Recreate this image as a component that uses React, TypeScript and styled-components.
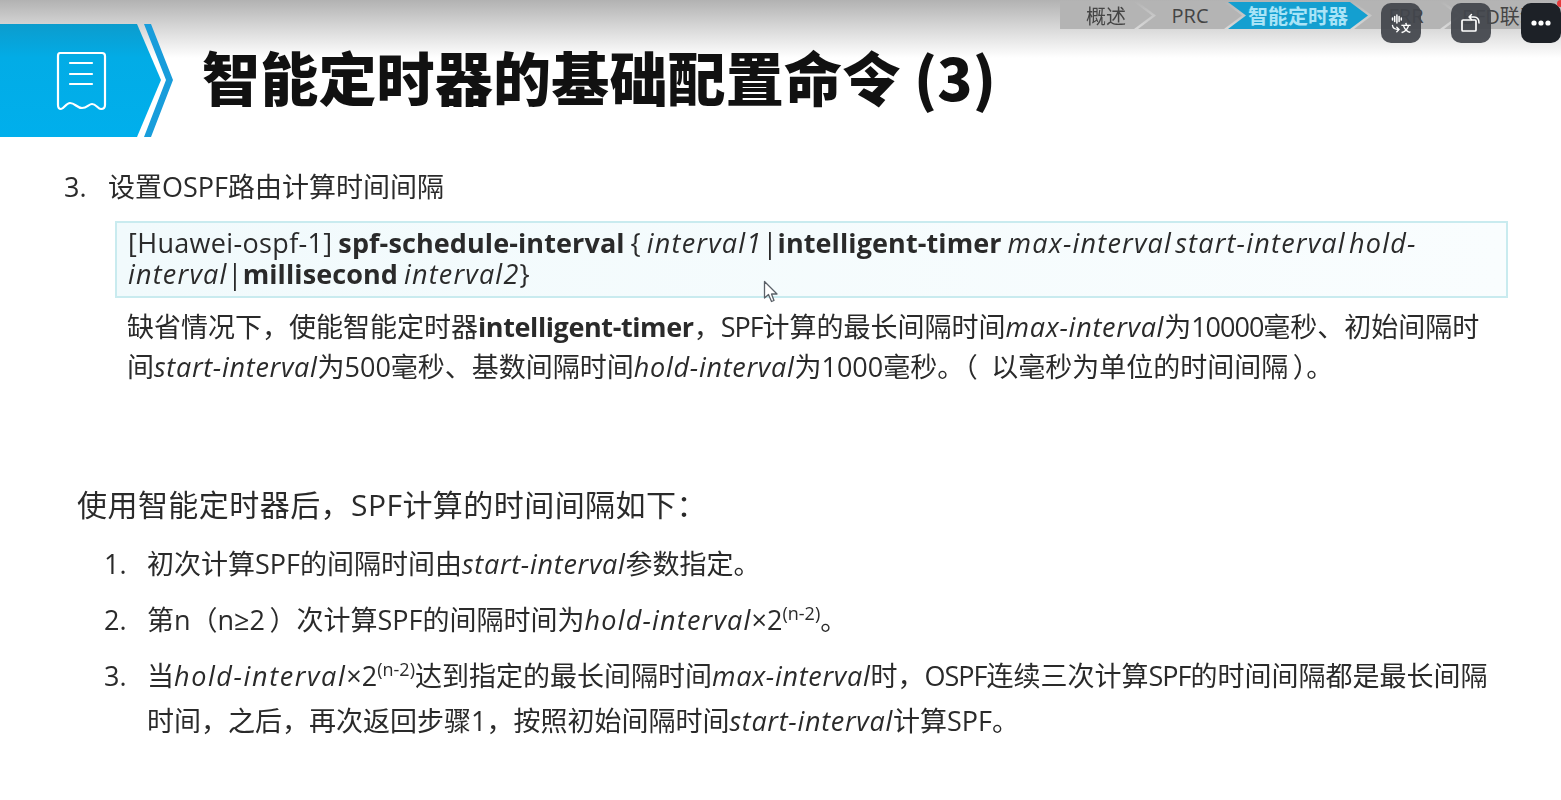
import styled, { createGlobalStyle } from "styled-components";

const GlobalStyle = createGlobalStyle`
  html, body {
    margin: 0;
    padding: 0;
    background: #fff;
  }
`;

const Page = styled.div`
  position: relative;
  width: 1561px;
  height: 800px;
  overflow: hidden;
  background: #fff;
  color: #2a2a2a;
  font-family: "Open Sans", "Noto Sans CJK SC", sans-serif;
`;

const Slide = styled.div`
  filter: blur(0.5px);
`;

const Header = styled.header`
  height: 137px;
  padding-top: 24px;
  box-sizing: border-box;
  display: flex;
  align-items: flex-start;
  background: linear-gradient(#b2b2b2 0, #d8d8d8 28px, #fff 58px);
`;

const Banner = styled.svg`
  flex: none;
  display: block;
`;

const Title = styled.h1`
  margin: 19px 0 0 27px;
  font-size: 58px;
  line-height: 66px;
  letter-spacing: 0.2px;
  font-weight: 900;
  color: #111;
  white-space: nowrap;
  font-family: "Noto Sans CJK SC", sans-serif;
`;

const Nav = styled.nav`
  position: absolute;
  top: 2px;
  left: 1060px;
  display: flex;
  height: 27px;
`;

const Crumb = styled.div<{ $w: number; $active?: boolean; $first?: boolean }>`
  flex: none;
  width: ${(p) => p.$w}px;
  margin-right: -14px;
  display: flex;
  align-items: center;
  justify-content: center;
  font-size: 20px;
  white-space: nowrap;
  background: ${(p) => (p.$active ? "#149fd0" : "#b4b4b4")};
  color: ${(p) => (p.$active ? "#a9e4f7" : "#444")};
  font-weight: ${(p) => (p.$active ? 700 : 400)};
  clip-path: ${(p) =>
    p.$first
      ? "polygon(0 0, calc(100% - 18px) 0, 100% 50%, calc(100% - 18px) 100%, 0 100%)"
      : "polygon(0 0, calc(100% - 18px) 0, 100% 50%, calc(100% - 18px) 100%, 0 100%, 18px 50%)"};
`;

const Body = styled.main`
  padding: 30px 0 0 64px;
  font-size: 27px;
  line-height: 40px;
`;

const Step = styled.div`
  display: flex;
  white-space: nowrap;
`;

const StepNo = styled.span`
  width: 44px;
  flex: none;
`;

const CommandBox = styled.div`
  width: 1393px;
  height: 77px;
  margin: 14px 0 0 51px;
  padding: 4px 11px 0;
  box-sizing: border-box;
  border: 2px solid #c9ebef;
  background: linear-gradient(90deg, #f1fafc, #f9fdfe);
  font-size: 27px;
  line-height: 31px;
  letter-spacing: 0.33px;
  word-spacing: -1.5px;
  white-space: nowrap;
`;

const Paragraph = styled.p`
  margin: 9px 0 0 63px;
  white-space: nowrap;
`;

const Intro = styled.p`
  margin: 98px 0 0 13px;
  font-size: 30px;
  letter-spacing: 0.45px;
  white-space: nowrap;
`;

const Steps = styled.ol`
  list-style: none;
  margin: 16px 0 0 40px;
  padding: 0;
  display: flex;
  flex-direction: column;
  gap: 11px;
  line-height: 45px;
`;

const StepItem = styled.li`
  display: flex;
  white-space: nowrap;
`;

const ItemNo = styled.span`
  width: 43px;
  flex: none;
`;

const Term = styled.i<{ $track?: number }>`
  font-style: italic;
  letter-spacing: ${(p) => p.$track ?? 0.7}px;
`;

const CommandTerm = styled(Term)`
  letter-spacing: 1.2px;
  word-spacing: -5px;
`;

const Key = styled.b`
  font-weight: 700;
  letter-spacing: -0.4px;
`;

const CommandKey = styled(Key)`
  letter-spacing: 0.1px;
`;

const Latin = styled.span`
  letter-spacing: -1px;
`;

const Sup = styled.sup`
  font-size: 18px;
  line-height: 0;
  vertical-align: 10px;
`;

const FloatButton = styled.button<{ $x: number; $dark?: boolean }>`
  position: absolute;
  top: 3px;
  left: ${(p) => p.$x}px;
  width: 40px;
  height: 40px;
  padding: 0;
  border: 0;
  border-radius: 10px;
  display: flex;
  align-items: center;
  justify-content: center;
  background: ${(p) => (p.$dark ? "#1d2127" : "rgba(66, 69, 75, 0.93)")};
  color: #fff;
`;

const TranslateGlyph = styled.span`
  position: absolute;
  left: 20px;
  top: 19px;
  font-size: 10px;
  line-height: 11px;
  font-weight: 700;
  font-family: "Noto Sans CJK SC", sans-serif;
`;

const Pointer = styled.svg`
  position: absolute;
  left: 763px;
  top: 280px;
`;

const RedDot = styled.div`
  position: absolute;
  top: -3px;
  right: -3px;
  width: 7px;
  height: 7px;
  border-radius: 50%;
  background: #e5393a;
`;

export default function App() {
  return (
    <Page>
      <GlobalStyle />
      <Slide>
        <Header>
          <Banner width="175" height="113" viewBox="0 0 175 113">
            <defs>
              <linearGradient id="bannerFill" x1="0" y1="0" x2="0" y2="1">
                <stop offset="0" stopColor="#0c9ccd" />
                <stop offset="0.3" stopColor="#02ace6" />
                <stop offset="1" stopColor="#00afec" />
              </linearGradient>
            </defs>
            <path d="M0 0H137L161 56L137 113H0Z" fill="url(#bannerFill)" />
            <path d="M144 0H151L173 56L151 113H144L166 56Z" fill="#189ddb" />
            <g fill="none" stroke="#fff" strokeWidth="2.2" strokeLinecap="round" strokeLinejoin="round">
              <path d="M60 29H102Q105 29 105 32V81Q105 85 101 85C98 85 96 80 92 80C89 80 87 84 82 84C77 84 75 79 70 79C66 79 64 85 61 85Q58 85 58 81V32Q58 29 60 29Z" />
              <path d="M70 39H92M70 50H92M70 60H92" />
            </g>
          </Banner>
          <Title>智能定时器的基础配置命令 (3)</Title>
        </Header>
        <Nav>
          <Crumb $w={92} $first>概述</Crumb>
          <Crumb $w={104}>PRC</Crumb>
          <Crumb $w={140} $active>智能定时器</Crumb>
          <Crumb $w={104}>FRR</Crumb>
          <Crumb $w={114}>BFD联动</Crumb>
        </Nav>
        <Body>
          <Step>
            <StepNo>3.</StepNo>
            <span>设置OSPF路由计算时间间隔</span>
          </Step>
          <CommandBox>
            [Huawei-ospf-1] <CommandKey>spf-schedule-interval</CommandKey> {"{ "}
            <CommandTerm>interval1</CommandTerm>|<CommandKey>intelligent-timer</CommandKey>{" "}
            <CommandTerm>max-interval start-interval hold-</CommandTerm>
            <br />
            <CommandTerm>interval</CommandTerm>|<CommandKey>millisecond</CommandKey> <CommandTerm>interval2</CommandTerm>{"}"}
          </CommandBox>
          <Paragraph>
            缺省情况下，使能智能定时器<Key>intelligent-timer</Key>，<Latin>SPF</Latin>计算的最长间隔时间<Term>max-interval</Term>为<Latin>10000</Latin>毫秒、初始间隔时
            <br />
            间<Term>start-interval</Term>为500毫秒、基数间隔时间<Term>hold-interval</Term>为1000毫秒。（{"\u2002"}以毫秒为单位的时间间隔{"\u2009"}）。
          </Paragraph>
          <Intro>使用智能定时器后，SPF计算的时间间隔如下：</Intro>
          <Steps>
            <StepItem>
              <ItemNo>1.</ItemNo>
              <span>初次计算SPF的间隔时间由<Term>start-interval</Term>参数指定。</span>
            </StepItem>
            <StepItem>
              <ItemNo>2.</ItemNo>
              <span>第n（n≥2{"\u2009"}）次计算SPF的间隔时间为<Term $track={1.2}>hold-interval</Term>×2<Sup>(n-2)</Sup>。</span>
            </StepItem>
            <StepItem>
              <ItemNo>3.</ItemNo>
              <span>
                当<Term $track={1.6}>hold-interval</Term>×2<Sup>(n-2)</Sup>达到指定的最长间隔时间<Term>max-interval</Term>时，<Latin>OSPF</Latin>连续三次计算<Latin>SPF</Latin>的时间间隔都是最长间隔
                <br />
                时间，之后，再次返回步骤1，按照初始间隔时间<Term>start-interval</Term>计算SPF。
              </span>
            </StepItem>
          </Steps>
        </Body>
      </Slide>
      <Pointer width="16" height="24" viewBox="0 0 16 24">
        <path d="M1.5 1.5V18L5.5 14.5L8.5 21.5L11 20.5L8.5 14H14Z" fill="#fff" stroke="#5b6168" strokeWidth="1.3" strokeLinejoin="round" />
      </Pointer>
      <FloatButton $x={1381}>
        <svg width="24" height="24" viewBox="0 0 24 24" fill="none" stroke="#fff" strokeLinecap="round">
          <path d="M3.5 7V9M5.7 5.5V10.5M7.9 4V12M10.1 5.5V10.5M12.3 7V9" strokeWidth="1.5" />
          <path d="M3.5 14.5Q4 18.5 10 18.5M7.8 16.3L10 18.5L7.8 20.7" strokeWidth="1.4" />
        </svg>
        <TranslateGlyph>文</TranslateGlyph>
      </FloatButton>
      <FloatButton $x={1451}>
        <svg width="24" height="24" viewBox="0 0 24 24" fill="none" stroke="#fff" strokeWidth="1.7" strokeLinecap="round" strokeLinejoin="round">
          <rect x="3" y="9" width="14" height="11" rx="1" />
          <path d="M10 6H15Q20 6 20 12M12.5 3.5L10 6L12.5 8.5" strokeWidth="1.5" />
        </svg>
      </FloatButton>
      <FloatButton $x={1521} $dark>
        <svg width="24" height="8" viewBox="0 0 24 8" fill="#fff">
          <circle cx="5" cy="4" r="2.6" />
          <circle cx="12" cy="4" r="2.6" />
          <circle cx="19" cy="4" r="2.6" />
        </svg>
        <RedDot />
      </FloatButton>
    </Page>
  );
}
